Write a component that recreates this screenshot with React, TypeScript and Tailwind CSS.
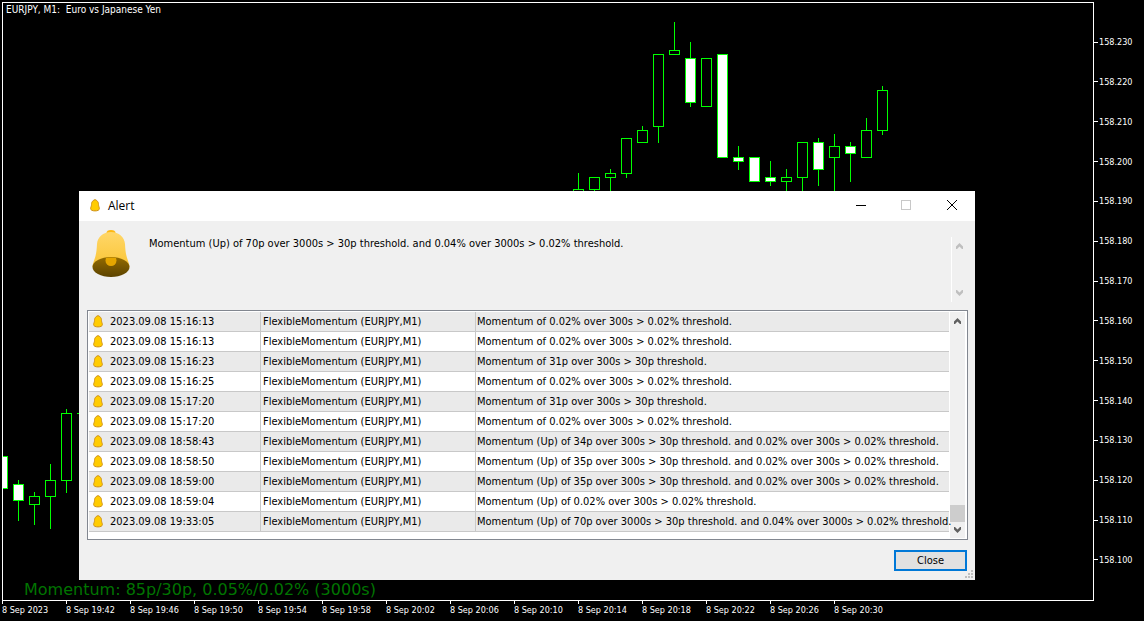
import { useState } from 'react';

type Candle = {
  slot: number;
  high: number;
  top: number;
  bottom: number;
  low: number;
  down?: boolean;
};

const prices = [
  '158.230',
  '158.220',
  '158.210',
  '158.200',
  '158.190',
  '158.180',
  '158.170',
  '158.160',
  '158.150',
  '158.140',
  '158.130',
  '158.120',
  '158.110',
  '158.100',
];

const times = [
  '8 Sep 2023',
  '8 Sep 19:42',
  '8 Sep 19:46',
  '8 Sep 19:50',
  '8 Sep 19:54',
  '8 Sep 19:58',
  '8 Sep 20:02',
  '8 Sep 20:06',
  '8 Sep 20:10',
  '8 Sep 20:14',
  '8 Sep 20:18',
  '8 Sep 20:22',
  '8 Sep 20:26',
  '8 Sep 20:30',
];

// one slot per minute, 16px apart
const candles: Candle[] = [
  { slot: 0, high: 456, top: 456, bottom: 489, low: 489, down: true },
  { slot: 1, high: 480, top: 484, bottom: 501, low: 521, down: true },
  { slot: 2, high: 492, top: 496, bottom: 505, low: 525 },
  { slot: 3, high: 464, top: 480, bottom: 497, low: 529 },
  { slot: 4, high: 409, top: 413, bottom: 481, low: 493 },
  { slot: 5, high: 413, top: 413, bottom: 414, low: 450 },
  { slot: 36, high: 173, top: 189, bottom: 200, low: 200 },
  { slot: 37, high: 177, top: 177, bottom: 190, low: 200 },
  { slot: 38, high: 169, top: 173, bottom: 178, low: 200 },
  { slot: 39, high: 138, top: 138, bottom: 174, low: 178 },
  { slot: 40, high: 126, top: 130, bottom: 143, low: 143 },
  { slot: 41, high: 54, top: 54, bottom: 127, low: 143 },
  { slot: 42, high: 22, top: 50, bottom: 55, low: 55 },
  { slot: 43, high: 42, top: 58, bottom: 103, low: 107, down: true },
  { slot: 44, high: 58, top: 58, bottom: 107, low: 107 },
  { slot: 45, high: 54, top: 54, bottom: 158, low: 158, down: true },
  { slot: 46, high: 146, top: 157, bottom: 162, low: 170, down: true },
  { slot: 47, high: 157, top: 157, bottom: 182, low: 182, down: true },
  { slot: 48, high: 161, top: 177, bottom: 182, low: 186, down: true },
  { slot: 49, high: 169, top: 177, bottom: 182, low: 200 },
  { slot: 50, high: 142, top: 142, bottom: 178, low: 200 },
  { slot: 51, high: 138, top: 142, bottom: 170, low: 186, down: true },
  { slot: 52, high: 134, top: 146, bottom: 158, low: 200 },
  { slot: 53, high: 142, top: 146, bottom: 154, low: 182, down: true },
  { slot: 54, high: 118, top: 130, bottom: 158, low: 158 },
  { slot: 55, high: 86, top: 90, bottom: 131, low: 135 },
];

const alerts = [
  { time: '2023.09.08 15:16:13', text: 'Momentum of 0.02% over 300s > 0.02% threshold.' },
  { time: '2023.09.08 15:16:13', text: 'Momentum of 0.02% over 300s > 0.02% threshold.' },
  { time: '2023.09.08 15:16:23', text: 'Momentum of 31p over 300s > 30p threshold.' },
  { time: '2023.09.08 15:16:25', text: 'Momentum of 0.02% over 300s > 0.02% threshold.' },
  { time: '2023.09.08 15:17:20', text: 'Momentum of 31p over 300s > 30p threshold.' },
  { time: '2023.09.08 15:17:20', text: 'Momentum of 0.02% over 300s > 0.02% threshold.' },
  {
    time: '2023.09.08 18:58:43',
    text: 'Momentum (Up) of 34p over 300s > 30p threshold. and 0.02% over 300s > 0.02% threshold.',
  },
  {
    time: '2023.09.08 18:58:50',
    text: 'Momentum (Up) of 35p over 300s > 30p threshold. and 0.02% over 300s > 0.02% threshold.',
  },
  {
    time: '2023.09.08 18:59:00',
    text: 'Momentum (Up) of 35p over 300s > 30p threshold. and 0.02% over 300s > 0.02% threshold.',
  },
  { time: '2023.09.08 18:59:04', text: 'Momentum (Up) of 0.02% over 300s > 0.02% threshold.' },
  {
    time: '2023.09.08 19:33:05',
    text: 'Momentum (Up) of 70p over 3000s > 30p threshold. and 0.04% over 3000s > 0.02% threshold.',
  },
];

const SmallBell = () => (
  <svg width="10" height="13" viewBox="0 0 10 13" className="shrink-0">
    <path
      d="M5 .7C5.800 .7 6.200 1.200 6.900 1.700C8.200 2.600 8.500 4 8.500 5.500C8.500 7.500 9.400 8 9.400 9.600C9.400 11.200 7.400 11.900 5 11.900C2.600 11.900 .6 11.200 .6 9.600C.6 8 1.500 7.500 1.500 5.500C1.500 4 1.800 2.600 3.100 1.700C3.800 1.200 4.200 .7 5 .7Z"
      fill="#ffcc00"
      stroke="#cf921a"
    />
  </svg>
);

const BigBell = () => (
  <svg width="38" height="48" viewBox="0 0 38 48" className="shrink-0">
    <defs>
      <linearGradient id="bell" x1="0" y1="0" x2="0" y2="1">
        <stop offset="0" stopColor="#ffd769" />
        <stop offset="1" stopColor="#fac536" />
      </linearGradient>
      <linearGradient id="mouth" x1="0" y1="0" x2="0" y2="1">
        <stop offset="0" stopColor="#936b00" />
        <stop offset="1" stopColor="#5c4300" />
      </linearGradient>
      <clipPath id="rim">
        <ellipse cx="19" cy="37" rx="18.5" ry="9.5" />
      </clipPath>
    </defs>
    <ellipse cx="19" cy="3" rx="4.5" ry="3" fill="#fdb813" />
    <path
      d="M19 2C27 2 32.500 7 33 14C33.300 19 33.500 22 34.500 26C35.500 30 37 32 37.500 37L.5 37C1 32 2.500 30 3.500 26C4.500 22 4.700 19 5 14C5.500 7 11 2 19 2Z"
      fill="url(#bell)"
    />
    <ellipse cx="19" cy="37" rx="18.5" ry="10" fill="url(#mouth)" />
    <circle cx="19" cy="30.5" r="5.5" fill="#e5a600" clipPath="url(#rim)" />
  </svg>
);

const Chevron = ({ down, color }: { down?: boolean; color: string }) => (
  <svg width="7" height="6" viewBox="0 0 7 6" fill={color}>
    <path
      d={
        down
          ? 'M0 0H1L3.500 2.500L6 0H7V2.500L3.500 6L0 2.500Z'
          : 'M0 6H1L3.500 3.500L6 6H7V3.500L3.500 0L0 3.500Z'
      }
    />
  </svg>
);

const Chart = () => (
  <svg className="absolute inset-0 w-full h-full" shapeRendering="crispEdges">
    <g transform="translate(-3 -3)">
      {candles.map(({ slot, high, top, bottom, low, down }) => {
        const x = 2 + slot * 16;
        return (
          <g key={slot} fill="#00ff00">
            <rect x={x} y={high} width="1" height={low - high} />
            <rect x={x - 5} y={top} width="11" height={bottom - top} />
            <rect
              x={x - 4}
              y={top + 1}
              width="9"
              height={Math.max(0, bottom - top - 2)}
              fill={down ? '#fff' : '#000'}
            />
          </g>
        );
      })}
    </g>
  </svg>
);

const AlertDialog = ({ onClose }: { onClose: () => void }) => (
  <div
    role="dialog"
    aria-label="Alert"
    className="absolute left-[79px] top-[191px] w-[896px] bg-[#f0f0f0] text-black text-[11px] leading-[14px]"
  >
    {/* title bar */}
    <div className="flex h-[30px] bg-white">
      <div className="flex items-center flex-1 pl-[11px] pb-px">
        <SmallBell />
        <h1 className="pl-2 text-xs font-['Open_Sans','Noto_Sans',sans-serif]">Alert</h1>
      </div>
      <button type="button" aria-label="Minimize" className="flex items-center justify-center w-11 pb-px">
        <span className="w-[10px] h-px bg-black" />
      </button>
      <button
        type="button"
        aria-label="Maximize"
        disabled
        className="flex items-center justify-center w-[46px] pb-[2px]"
      >
        <span className="w-[10px] h-[10px] border border-[#c8c8c8]" />
      </button>
      <button
        type="button"
        aria-label="Close window"
        onClick={onClose}
        className="flex items-center justify-center w-[46px] pb-[2px]"
      >
        <svg width="10" height="10" viewBox="0 0 10 10" stroke="#000">
          <path d="M0 0L10 10M10 0L0 10" />
        </svg>
      </button>
    </div>

    {/* last message */}
    <div className="flex h-[89px] pl-[13px] pr-2">
      <div className="pt-[9px]">
        <BigBell />
      </div>
      <p className="flex-1 pt-4 pl-[19px]">{alerts[alerts.length - 1].text}</p>
      <div className="flex flex-col items-center justify-between w-4 h-[65px] mt-4 py-[6px] border-l border-white">
        <Chevron color="#bfbfbf" />
        <Chevron down color="#bfbfbf" />
      </div>
    </div>

    {/* history */}
    <div className="flex ml-2 mr-[7px] p-px pr-[2px] bg-white border border-[#828790]">
      <div className="relative z-10 flex-1 min-w-0 pb-[6px]">
        <table className="w-full border-separate table-fixed border-spacing-0">
          <colgroup>
            <col className="w-[172px]" />
            <col className="w-[215px]" />
            <col />
          </colgroup>
          <tbody>
            {alerts.map((alert, i) => (
              <tr key={i} className="h-5 odd:bg-[#eaeaea]">
                <td className="p-0 border-r border-b border-[#c8c8c8]">
                  <div className="flex items-center gap-[7px] pl-1">
                    <SmallBell />
                    {alert.time}
                  </div>
                </td>
                <td className="p-0 pl-[2px] border-r border-b border-[#c8c8c8]">
                  FlexibleMomentum (EURJPY,M1)
                </td>
                <td className="p-0 pl-px whitespace-nowrap border-b border-[#c8c8c8]">{alert.text}</td>
              </tr>
            ))}
          </tbody>
        </table>
      </div>
      <div className="flex flex-col items-center w-[15px] ml-px pt-[6px] pb-[5px] bg-[#f0f0f0]">
        <Chevron color="#606060" />
        <div className="flex-1" />
        <div className="w-full h-[17px] bg-[#cdcdcd]" />
        <div className="pt-[5px]">
          <Chevron down color="#606060" />
        </div>
      </div>
    </div>

    <div className="flex justify-end pt-[10px] pb-[9px] pr-2">
      <button
        type="button"
        onClick={onClose}
        className="w-[73px] h-[21px] border-2 border-[#0078d7] bg-[#e1e1e1] leading-[17px]"
      >
        Close
      </button>
    </div>
    <svg className="absolute right-[2px] bottom-[2px]" width="8" height="8" fill="#bfbfbf">
      <path d="M6 0h2v2h-2zM3 3h2v2h-2zM6 3h2v2h-2zM0 6h2v2h-2zM3 6h2v2h-2zM6 6h2v2h-2z" />
    </svg>
  </div>
);

export default function App() {
  const [open, setOpen] = useState<boolean>(true);

  return (
    <main className="relative flex flex-col min-h-screen pt-[2px] pl-[2px] overflow-hidden bg-black text-white text-[9px] leading-3 font-['DejaVu_Sans_Condensed','DejaVu_Sans',sans-serif]">
      <div className="flex flex-1">
        <section className="relative flex-1 border border-white">
          <Chart />
          <h2 className="relative pt-px pl-[3px] text-[10px] whitespace-pre">EURJPY, M1:  Euro vs Japanese Yen</h2>
          <p className="absolute bottom-0 left-[21px] text-base leading-5 text-[#007400] font-['DejaVu_Sans',sans-serif]">
            Momentum: 85p/30p, 0.05%/0.02% (3000s)
          </p>
        </section>

        {/* price axis */}
        <ul className="flex flex-col justify-between w-[50px] pt-[34px] pb-[35px]">
          {prices.map((price) => (
            <li key={price} className="flex items-center gap-px">
              <span className="w-1 h-px bg-white" />
              {price}
            </li>
          ))}
        </ul>
      </div>

      {/* time axis */}
      <ul className="flex h-5">
        {times.map((time) => (
          <li key={time} className="w-16 whitespace-nowrap">
            <span className="block w-px h-[3px] bg-white" />
            {time}
          </li>
        ))}
      </ul>

      {open && <AlertDialog onClose={() => setOpen(false)} />}
    </main>
  );
}
